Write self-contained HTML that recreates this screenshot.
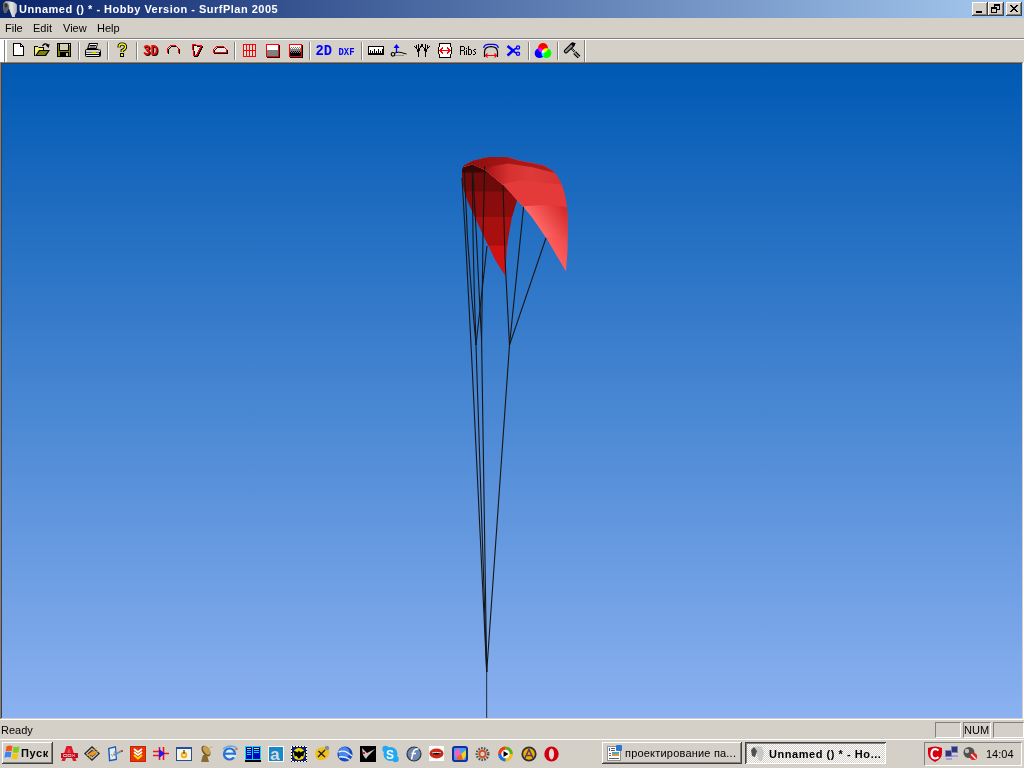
<!DOCTYPE html>
<html><head><meta charset="utf-8">
<style>
html,body{margin:0;padding:0;width:1024px;height:768px;overflow:hidden;background:#d4d0c8;font-family:"Liberation Sans",sans-serif;font-size:11px;color:#000}
.a{position:absolute}
#title{left:0;top:0;width:1024px;height:18px;background:linear-gradient(to right,#0a246a,#a6caf0)}
#ttext{left:19px;top:3px;letter-spacing:0.5px;color:#fff;font-weight:bold;font-size:11px;line-height:13px;white-space:nowrap}
.cb{width:16px;height:14px;top:2px;background:#d4d0c8;box-shadow:inset -1px -1px #404040,inset 1px 1px #fff,inset -2px -2px #808080}
.menu{top:22px;line-height:13px;white-space:nowrap}
.hl{height:1px}
.ic{width:16px;height:16px}
#vp{left:2px;top:64px;width:1020px;height:654px;background:linear-gradient(to bottom,#0059b3,#8bb1f0)}
.pane{top:722px;height:16px;box-sizing:border-box;border-top:1px solid #808080;border-left:1px solid #808080;border-bottom:1px solid #fff;border-right:1px solid #fff}
.btn{box-sizing:border-box;background:#d4d0c8;box-shadow:inset -1px -1px #404040,inset 1px 1px #fff,inset -2px -2px #808080}
</style></head><body>
<!-- title bar -->
<div id="title" class="a"></div>
<svg class="a" style="left:0;top:0" width="20" height="18" viewBox="0 0 20 18">
<defs><linearGradient id="gIc" x1="8" y1="0" x2="17" y2="0" gradientUnits="userSpaceOnUse"><stop offset="0" stop-color="#b8b8b8"/><stop offset="0.35" stop-color="#e8e8e8"/><stop offset="1" stop-color="#b0b0b8"/></linearGradient></defs>
<path d="M6 1.2 H9 L14 2.3 L16.9 4.4 V11.7 L15 15 V17 H12.2 L8.9 8.2 L7.7 9.8 L6.1 12.7 H4 L3 4.7 L4.2 2.3 Z" fill="url(#gIc)"/>
<path d="M4.2 2.6 L7 3 L8.6 5 L8.9 8.2 L7.7 9.8 L6.1 12.7 H4 L3 4.7 Z" fill="#606058"/>
<path d="M5 3.5 L7 3.8 L7.5 6 L6 8 L4.5 6 Z" fill="#303030"/>
</svg>
<div id="ttext" class="a">Unnamed () * - Hobby Version - SurfPlan 2005</div>
<div class="a cb" style="left:972px"></div>
<div class="a cb" style="left:988px"></div>
<div class="a cb" style="left:1006px"></div>
<svg class="a" style="left:960px;top:0" width="64" height="18" viewBox="960 0 64 18" shape-rendering="crispEdges">
<rect x="976" y="11" width="6" height="2" fill="#000"/>
<rect x="994" y="4" width="6" height="6" fill="#000"/><rect x="995" y="6" width="4" height="3" fill="#d4d0c8"/>
<rect x="991" y="7" width="6" height="6" fill="#000"/><rect x="992" y="9" width="4" height="3" fill="#d4d0c8"/>
<path d="M1010 5h2v1h1v1h2v-1h1v-1h2v1h-1v1h-1v1h-1v1h1v1h1v1h1v1h-2v-1h-1v-1h-2v1h-1v1h-2v-1h1v-1h1v-1h1v-1h-1v-1h-1v-1h-1z" fill="#000"/>
</svg>
<!-- menu -->
<div class="a menu" style="left:5px">File</div>
<div class="a menu" style="left:33px">Edit</div>
<div class="a menu" style="left:63px">View</div>
<div class="a menu" style="left:97px">Help</div>
<div class="a hl" style="left:0;top:38px;width:1024px;background:#808080"></div>
<div class="a hl" style="left:0;top:39px;width:1024px;background:#fff"></div>
<!-- toolbar -->
<div class="a" style="left:0;top:40px;width:7px;height:22px;background:#fff"></div>
<div class="a" style="left:4px;top:40px;width:1px;height:22px;background:#808080"></div>
<div class="a" style="left:584px;top:40px;width:1px;height:22px;background:#808080"></div>
<div class="a" style="left:585px;top:40px;width:1px;height:22px;background:#fff"></div>
<svg class="a" style="left:0;top:0" width="600" height="64" viewBox="0 0 600 64"><defs><pattern id="pWG" x="0" y="0" width="2" height="2" patternUnits="userSpaceOnUse"><rect width="2" height="2" fill="#fff"/><rect width="1" height="1" fill="#808080"/><rect x="1" y="1" width="1" height="1" fill="#808080"/></pattern>
<pattern id="pGB" x="0" y="0" width="2" height="2" patternUnits="userSpaceOnUse"><rect width="2" height="2" fill="#808080"/><rect width="1" height="1" fill="#000"/><rect x="1" y="1" width="1" height="1" fill="#000"/></pattern></defs>
<g shape-rendering="crispEdges"><rect x="78" y="42" width="1" height="18" fill="#808080"/><rect x="79" y="42" width="1" height="18" fill="#fff"/><rect x="107" y="42" width="1" height="18" fill="#808080"/><rect x="108" y="42" width="1" height="18" fill="#fff"/><rect x="136" y="42" width="1" height="18" fill="#808080"/><rect x="137" y="42" width="1" height="18" fill="#fff"/><rect x="234" y="42" width="1" height="18" fill="#808080"/><rect x="235" y="42" width="1" height="18" fill="#fff"/><rect x="309" y="42" width="1" height="18" fill="#808080"/><rect x="310" y="42" width="1" height="18" fill="#fff"/><rect x="361" y="42" width="1" height="18" fill="#808080"/><rect x="362" y="42" width="1" height="18" fill="#fff"/><rect x="528" y="42" width="1" height="18" fill="#808080"/><rect x="529" y="42" width="1" height="18" fill="#fff"/><rect x="557" y="42" width="1" height="18" fill="#808080"/><rect x="558" y="42" width="1" height="18" fill="#fff"/></g>
<!-- new -->
<path d="M14 44 H20 L23 47 V55 H14 Z" fill="#fff"/>
<path d="M13.5 55.5 V43.5 H20.5 L23.5 46.5 V55.5 Z M20.5 43.5 V46.5 H23.5" fill="none" stroke="#000" shape-rendering="crispEdges"/>
<!-- open -->
<path d="M34.5 55.5 V46.5 H37.5 L38.5 47.5 H43.5 V49.5" fill="none" stroke="#000" shape-rendering="crispEdges"/>
<polygon points="35,47 38,47 39,48 43,48 43,50 39,50 35,55" fill="#f4f470"/>
<polygon points="35,56 39,50 50,50 46,56" fill="#000"/>
<polygon points="36.6,55 40,51 48,51 45,55" fill="#808000"/>
<path d="M42.5 46 Q44.5 42.6 47.8 44.8" fill="none" stroke="#000" stroke-width="1.3"/>
<polygon points="45.8,45.2 49.6,44 48.6,48" fill="#000"/>
<!-- save -->
<g shape-rendering="crispEdges">
<rect x="57" y="43" width="14" height="14" fill="#000"/>
<rect x="58" y="44" width="12" height="12" fill="#808000"/>
<rect x="59" y="43" width="10" height="8" fill="#000"/>
<rect x="60" y="44" width="8" height="6" fill="#d4d0c8"/>
<rect x="60" y="52" width="9" height="5" fill="#000"/>
<rect x="66" y="53" width="2" height="3" fill="#c0c0c0"/>
<rect x="69" y="44" width="1" height="1" fill="#fff"/>
</g>
<!-- printer -->
<polygon points="89,43 98,43 96.5,49 87,49" fill="#000"/>
<polygon points="90,44 97,44 95.7,48 88.5,48" fill="#fff"/>
<path d="M90 45.5 H96 M89.5 47 H95.5" stroke="#000" stroke-width="1"/>
<rect x="85" y="49" width="16" height="8" rx="2" fill="#000"/>
<rect x="86" y="50" width="14" height="2" fill="#d4d0c8"/>
<rect x="86" y="52.5" width="13" height="1.5" fill="#e8e8e8"/>
<rect x="92" y="52.5" width="4" height="1.5" fill="#ffff00"/>
<rect x="86" y="55" width="13" height="1" fill="#e8e8e8"/>
<path d="M97.5 48.5 L100.5 50.5 M98.5 51 L100 49" stroke="#808080" stroke-width="1"/>
<!-- help -->
<path d="M119 47.5 Q119 44 122 44 Q125.5 44 125.5 47 Q125.5 49 122.2 50.5 V52" stroke="#000" stroke-width="3.2" fill="none"/>
<path d="M119 47.5 Q119 44 122 44 Q125.5 44 125.5 47 Q125.5 49 122.2 50.5 V52" stroke="#ffff00" stroke-width="1.3" fill="none"/>
<rect x="120" y="53" width="4" height="4" fill="#000"/><rect x="121" y="54" width="2" height="2" fill="#ffff00"/>
<!-- 3D -->
<text x="144" y="56" font-family="Liberation Mono" font-weight="bold" font-size="14.5" textLength="15" lengthAdjust="spacingAndGlyphs" fill="#000">3D</text>
<text x="143" y="55" font-family="Liberation Mono" font-weight="bold" font-size="14.5" textLength="15" lengthAdjust="spacingAndGlyphs" fill="#ff0000">3D</text>
<!-- arc -->
<g shape-rendering="crispEdges" fill="none" stroke-width="1">
<path d="M168.5 54 V49.5 L171.5 46.5 H176.5 L179.5 49.5 V54" stroke="#000"/>
<path d="M167.5 53 V48.5 L170.5 45.5 H175.5 L178.5 48.5 V53" stroke="#ff0000"/>
<!-- V -->
<polygon points="193,45 196,45 197,46 202,46.5 197,55.5 194,55.5" fill="#e8e8e8" stroke="none"/>
<path d="M193.5 45.5 H196.5 L197.5 46.5 H202.5 L197.5 56.5 H194.5 Z" stroke="#000"/>
<path d="M192.5 44.5 H195.5 L196.5 45.5 H201.5 L196.5 55.5 H193.5 Z" stroke="#ff0000"/>
<!-- dome -->
<path d="M214 48 H225 L227 51 V53 H214 Z" fill="#e8e8e8" stroke="none"/>
<path d="M214.5 53.5 V50.5 L217.5 47.5 H224.5 L227.5 50.5 V53.5 Z" stroke="#000"/>
<path d="M213.5 52.5 V49.5 L216.5 46.5 H223.5 L226.5 49.5 V52.5 Z" stroke="#ff0000"/>
</g>
<g shape-rendering="crispEdges">
<!-- grid -->
<rect x="243" y="44" width="13" height="13" fill="#ff0000"/>
<rect x="244" y="45" width="2" height="5" fill="#d0e4dc"/><rect x="247" y="45" width="2" height="5" fill="#d0e4dc"/><rect x="250" y="45" width="2" height="5" fill="#d0e4dc"/><rect x="253" y="45" width="2" height="5" fill="#d0e4dc"/>
<rect x="244" y="51" width="2" height="5" fill="#d0e4dc"/><rect x="247" y="51" width="2" height="5" fill="#d0e4dc"/><rect x="250" y="51" width="2" height="5" fill="#d0e4dc"/><rect x="253" y="51" width="2" height="5" fill="#d0e4dc"/>
<!-- half box -->
<rect x="267" y="45" width="13" height="13" fill="#000"/>
<rect x="266" y="44" width="13" height="13" fill="#ff0000"/>
<rect x="267" y="45" width="11" height="5" fill="#fff"/>
<rect x="267" y="50" width="11" height="6" fill="#808080"/>
<!-- gradient box -->
<rect x="290" y="45" width="13" height="13" fill="#000"/>
<rect x="289" y="44" width="13" height="13" fill="#ff0000"/>
<rect x="290" y="45" width="11" height="2" fill="#fff"/>
<rect x="290" y="47" width="11" height="2" fill="url(#pWG)"/>
<rect x="290" y="49" width="11" height="2" fill="#808080"/>
<rect x="290" y="51" width="11" height="2" fill="url(#pGB)"/>
<rect x="290" y="53" width="11" height="3" fill="#000"/>
</g>
<!-- 2D / DXF -->
<text x="315.5" y="55" font-family="Liberation Mono" font-weight="bold" font-size="14.5" textLength="16.5" lengthAdjust="spacingAndGlyphs" fill="#0000ff">2D</text>
<text x="338.5" y="55" font-family="Liberation Mono" font-weight="bold" font-size="11" textLength="16" lengthAdjust="spacingAndGlyphs" fill="#0000ff">DXF</text>
<!-- ruler -->
<g shape-rendering="crispEdges">
<rect x="368" y="46" width="16" height="9" fill="#000"/>
<rect x="369" y="47" width="14" height="6" fill="#fff"/>
<rect x="370" y="50" width="1" height="3" fill="#000"/><rect x="372" y="51" width="1" height="2" fill="#000"/><rect x="374" y="49" width="1" height="4" fill="#000"/><rect x="376" y="51" width="1" height="2" fill="#000"/><rect x="378" y="49" width="1" height="4" fill="#000"/><rect x="380" y="51" width="1" height="2" fill="#000"/><rect x="382" y="49" width="1" height="4" fill="#000"/>
</g>
<!-- axis -->
<path d="M396.5 53 V46" stroke="#0000ff" stroke-width="1.3"/>
<polygon points="393.5,48 399.5,48 396.5,44" fill="#0000ff"/>
<circle cx="393" cy="54.3" r="1.8" fill="none" stroke="#000" stroke-width="1.2"/>
<path d="M395 53 Q398 51.5 401 52.5 L406.5 54" stroke="#000" stroke-width="1" fill="none"/>
<path d="M395 55.5 H404" stroke="#909090" stroke-width="1"/>
<!-- lines icon -->
<g shape-rendering="crispEdges"><g fill="#000"><rect x="414" y="46" width="1" height="1"/><rect x="415" y="47" width="1" height="1"/><rect x="416" y="45" width="1" height="1"/><rect x="416" y="46" width="1" height="1"/><rect x="416" y="47" width="1" height="1"/><rect x="416" y="48" width="1" height="1"/><rect x="417" y="49" width="1" height="1"/><rect x="417" y="50" width="1" height="1"/><rect x="417" y="51" width="1" height="1"/><rect x="418" y="44" width="1" height="1"/><rect x="418" y="45" width="1" height="1"/><rect x="418" y="46" width="1" height="1"/><rect x="418" y="47" width="1" height="1"/><rect x="418" y="48" width="1" height="1"/><rect x="418" y="49" width="1" height="1"/><rect x="418" y="50" width="1" height="1"/><rect x="418" y="51" width="1" height="1"/><rect x="418" y="52" width="1" height="1"/><rect x="418" y="53" width="1" height="1"/><rect x="418" y="54" width="1" height="1"/><rect x="418" y="55" width="1" height="1"/><rect x="418" y="56" width="1" height="1"/><rect x="421" y="44" width="1" height="1"/><rect x="422" y="44" width="1" height="1"/><rect x="421" y="45" width="1" height="1"/><rect x="422" y="45" width="1" height="1"/><rect x="420" y="46" width="1" height="1"/><rect x="421" y="46" width="1" height="1"/><rect x="422" y="46" width="1" height="1"/><rect x="420" y="47" width="1" height="1"/><rect x="419" y="48" width="1" height="1"/><rect x="419" y="49" width="1" height="1"/><rect x="419" y="50" width="1" height="1"/><rect x="423" y="47" width="1" height="1"/><rect x="424" y="48" width="1" height="1"/><rect x="424" y="49" width="1" height="1"/><rect x="424" y="50" width="1" height="1"/><rect x="425" y="44" width="1" height="1"/><rect x="425" y="45" width="1" height="1"/><rect x="425" y="46" width="1" height="1"/><rect x="425" y="47" width="1" height="1"/><rect x="425" y="48" width="1" height="1"/><rect x="425" y="49" width="1" height="1"/><rect x="425" y="50" width="1" height="1"/><rect x="425" y="51" width="1" height="1"/><rect x="425" y="52" width="1" height="1"/><rect x="425" y="53" width="1" height="1"/><rect x="425" y="54" width="1" height="1"/><rect x="425" y="55" width="1" height="1"/><rect x="425" y="56" width="1" height="1"/><rect x="427" y="45" width="1" height="1"/><rect x="427" y="46" width="1" height="1"/><rect x="427" y="47" width="1" height="1"/><rect x="427" y="48" width="1" height="1"/><rect x="426" y="49" width="1" height="1"/><rect x="426" y="50" width="1" height="1"/><rect x="426" y="51" width="1" height="1"/><rect x="428" y="47" width="1" height="1"/><rect x="429" y="46" width="1" height="1"/></g>
<!-- box arrows -->
<rect x="439" y="44" width="11" height="13" fill="#fff"/><rect x="438" y="47" width="14" height="7" fill="#fff"/>
<g fill="#000"><rect x="439" y="43" width="12" height="1"/><rect x="439" y="57" width="12" height="1"/>
<rect x="439" y="43" width="1" height="4"/><rect x="438" y="47" width="1" height="7"/><rect x="439" y="54" width="1" height="4"/>
<rect x="450" y="43" width="1" height="4"/><rect x="451" y="47" width="1" height="7"/><rect x="450" y="54" width="1" height="4"/></g>
<g fill="#ff0000"><rect x="439" y="50" width="12" height="1"/>
<rect x="440" y="49" width="1" height="3"/><rect x="441" y="48" width="1" height="1"/><rect x="441" y="52" width="1" height="1"/><rect x="442" y="47" width="1" height="1"/><rect x="442" y="53" width="1" height="1"/>
<rect x="449" y="49" width="1" height="3"/><rect x="448" y="48" width="1" height="1"/><rect x="448" y="52" width="1" height="1"/><rect x="447" y="47" width="1" height="1"/><rect x="447" y="53" width="1" height="1"/><rect x="441" y="49" width="1" height="3"/><rect x="442" y="48" width="1" height="1"/><rect x="442" y="52" width="1" height="1"/><rect x="448" y="49" width="1" height="3"/><rect x="447" y="48" width="1" height="1"/><rect x="447" y="52" width="1" height="1"/></g></g>
<!-- Ribs -->
<g fill="#000" shape-rendering="crispEdges"><rect x="460" y="46" width="1" height="9"/><rect x="461" y="46" width="3" height="1"/><rect x="464" y="47" width="1" height="3"/><rect x="461" y="50" width="3" height="1"/><rect x="464" y="51" width="1" height="4"/><rect x="466" y="48" width="1" height="1"/><rect x="466" y="50" width="1" height="5"/><rect x="468" y="46" width="1" height="9"/><rect x="469" y="49" width="2" height="1"/><rect x="471" y="50" width="1" height="4"/><rect x="469" y="54" width="2" height="1"/><rect x="474" y="49" width="2" height="1"/><rect x="473" y="50" width="1" height="1"/><rect x="474" y="51" width="1" height="1"/><rect x="475" y="52" width="1" height="2"/><rect x="473" y="54" width="2" height="1"/></g>
<!-- arch -->
<path d="M483.6 48 Q484.5 44.3 488.5 44.3 H493.5 Q497.5 44.3 498.4 48" stroke="#0000ff" stroke-width="1.2" fill="none"/>
<path d="M484.5 57 V52 Q484.5 46.6 491 46.6 Q497.5 46.6 497.5 52 V57" stroke="#000" stroke-width="1.2" fill="none"/>
<path d="M485.5 55.5 H496.5 M487.5 53.5 L485.5 55.5 L487.5 57.5 M494.5 53.5 L496.5 55.5 L494.5 57.5" stroke="#ff0000" stroke-width="1.1" fill="none"/>
<!-- scissors -->
<path d="M507.5 46 L513 50.5 L507.5 55.5" stroke="#0000ff" stroke-width="2.6" fill="none"/>
<path d="M512 50.5 L517 48 M512 50.5 L517 53.5" stroke="#0000ff" stroke-width="1.5" fill="none"/>
<circle cx="518" cy="47.5" r="1.6" fill="none" stroke="#0000ff" stroke-width="1.3"/>
<circle cx="518" cy="53.7" r="1.6" fill="none" stroke="#0000ff" stroke-width="1.3"/>
<!-- color circles -->
<g style="isolation:isolate">
<circle cx="543" cy="48" r="4.9" fill="#ff0000" style="mix-blend-mode:screen"/>
<circle cx="539.6" cy="53.2" r="4.9" fill="#0000ff" style="mix-blend-mode:screen"/>
<circle cx="546.4" cy="53.2" r="4.9" fill="#00ff00" style="mix-blend-mode:screen"/>
</g>
<!-- hammer -->
<path d="M566 51.3 L572.8 44.6" stroke="#000" stroke-width="4.4" stroke-linecap="round"/>
<path d="M566 51.3 L572.8 44.6" stroke="#909090" stroke-width="2.2" stroke-linecap="round"/>
<polygon points="570.5,43 576,43 572.8,46.6" fill="#000"/>
<path d="M571.5 48.5 L574.5 51.5" stroke="#000" stroke-width="2.2" stroke-dasharray="0.9 0.7"/>
<path d="M574.6 52.6 L579 57" stroke="#000" stroke-width="3.8"/>
<path d="M574.6 52.6 L579 57" stroke="#909090" stroke-width="1.6"/>
</svg>
<!-- viewport border -->
<div class="a hl" style="left:0;top:62px;width:1023px;background:#808080"></div>
<div class="a hl" style="left:1px;top:63px;width:1021px;background:#404040"></div>
<div class="a" style="left:0;top:62px;width:1px;height:657px;background:#808080"></div>
<div class="a" style="left:1px;top:63px;width:1px;height:655px;background:#404040"></div>
<div class="a hl" style="left:0;top:719px;width:1024px;background:#fff"></div>
<div class="a" style="left:1023px;top:62px;width:1px;height:658px;background:#fff"></div>
<div id="vp" class="a"></div>
<svg id="kite" class="a" style="left:0;top:0" width="1024" height="768" viewBox="0 0 1024 768">
<defs>
<clipPath id="cU"><polygon points="464.3,165.5 472.6,161 490,157 505,157 520,170 517,199.7 511.7,217.7 507.5,241.7 505,275.5 495,259.4 482.3,233 474.5,216 468,201.7 464,190 462,175.4 462,170"/></clipPath>
<clipPath id="cT"><polygon points="464,166.4 467.8,163.2 472.6,161.3 479,159.3 484.4,158.1 490.2,157.1 506.8,157.1 518.7,160.5 532.3,163.2 543.3,165.5 552.4,170.5 557.9,177.3 562.4,186.5 565.6,198.3 567,209.3 567.6,215.6 567.6,250 566.6,262.5 566,271.5 546,237.5 532.3,217.5 524,207.4 516.9,199.7 505,186.5 499.5,182 485.8,170.6 482.4,168.8 477.5,166.6 472.6,164.2 464.3,166.8"/></clipPath>
<linearGradient id="gS" x1="464" y1="0" x2="560" y2="0" gradientUnits="userSpaceOnUse"><stop offset="0" stop-color="#8a0e0e"/><stop offset="0.5" stop-color="#a81616"/><stop offset="1" stop-color="#b01c1c"/></linearGradient>
<linearGradient id="gB1" x1="486" y1="172" x2="560" y2="172" gradientUnits="userSpaceOnUse"><stop offset="0" stop-color="#a81414"/><stop offset="0.3" stop-color="#d63030"/><stop offset="0.6" stop-color="#de3a3a"/><stop offset="1" stop-color="#d53232"/></linearGradient>
<linearGradient id="gB3" x1="533" y1="220" x2="560" y2="202" gradientUnits="userSpaceOnUse"><stop offset="0" stop-color="#ff6868"/><stop offset="1" stop-color="#d82a2a"/></linearGradient>
<linearGradient id="gB4" x1="553" y1="252" x2="575" y2="238" gradientUnits="userSpaceOnUse"><stop offset="0" stop-color="#ff5c5c"/><stop offset="1" stop-color="#e64444"/></linearGradient>
</defs>
<g clip-path="url(#cU)">
<rect x="450" y="150" width="80" height="140" fill="#d01212"/>
<rect x="450" y="150" width="80" height="95.5" fill="#a80f0f"/>
<rect x="450" y="150" width="80" height="67" fill="#8a0c0c"/>
<rect x="450" y="150" width="80" height="41.5" fill="#6e0a0a"/>
<rect x="450" y="150" width="80" height="22.5" fill="#3e0404"/>
</g>
<g clip-path="url(#cT)">
<polygon fill="url(#gB4)" points="450,140 600,140 600,300 450,300"/>
<polygon fill="url(#gB3)" points="450,140 600,140 600,238 567.4,238 546,237.5 450,242"/>
<polygon fill="#e43a3a" points="450,140 600,140 600,208 566.9,207.3 546,204.7 524,206.3 450,212"/>
<polygon fill="url(#gB1)" points="450,140 600,140 600,188 559.7,184.6 532,181.4 520,180.5 503.7,183.9 450,192"/>
<polygon fill="url(#gS)" points="450,140 600,140 600,180 554,172.8 532.3,167.3 508,163.4 492.2,166.2 485.8,170.3 482.4,168.8 477.5,166.6 472.6,164.2 464.3,166.6 450,168"/>
</g>
<g fill="none" stroke="#161616" stroke-width="1.1">
<polyline points="462,178 465.4,236 468.5,296 472.3,370 486.7,672"/>
<polyline points="464.2,168 467.4,236 471.7,296 476,345"/>
<polyline points="472.2,165 473,236 474.4,296 476,345 486.7,672"/>
<polyline points="472.4,164.7 476.4,236 479.3,296 481.6,340 486.7,672"/>
<polyline points="484.7,166 483,236 481.6,340"/>
<polyline points="487,246 476,345"/>
<polyline points="503,185 505.1,260 509.5,345"/>
<polyline points="523.6,206.8 509.5,345"/>
<polyline points="546,238 509.5,345 486.7,672"/>
</g>
<line x1="486.6" y1="672" x2="486.6" y2="718" stroke="#34405a" stroke-width="1.2"/>
</svg>
<!-- status bar -->
<div class="a" style="left:1px;top:724px;line-height:13px">Ready</div>
<div class="a pane" style="left:935px;width:26px"></div>
<div class="a pane" style="left:963px;width:28px"><span class="a" style="left:0px;top:1px;line-height:13px">NUM</span></div>
<div class="a pane" style="left:993px;width:31px"></div>
<!-- taskbar -->
<div class="a hl" style="left:0;top:739px;width:1024px;background:#fff"></div>
<div class="a btn" style="left:2px;top:742px;width:51px;height:22px"></div>
<div class="a" style="left:21px;top:747px;font-weight:bold;font-size:11px;line-height:13px;letter-spacing:0.6px">Пуск</div>
<div class="a btn" style="left:602px;top:742px;width:140px;height:22px"></div>
<div class="a" style="left:625px;top:747px;line-height:13px;white-space:nowrap;letter-spacing:0.2px">проектирование па...</div>
<div class="a" style="left:745px;top:742px;width:141px;height:22px;box-sizing:border-box;background:conic-gradient(#fff 25%,#d4d0c8 0 50%,#fff 0 75%,#d4d0c8 0) 0 0/2px 2px;box-shadow:inset 1px 1px #404040,inset -1px -1px #fff,inset 2px 2px #808080"></div>
<div class="a" style="left:769px;top:748px;line-height:13px;font-weight:bold;white-space:nowrap;letter-spacing:0.55px">Unnamed () * - Ho...</div>
<div class="a" style="left:924px;top:742px;width:98px;height:24px;box-sizing:border-box;border-top:1px solid #808080;border-left:1px solid #808080;border-bottom:1px solid #fff;border-right:1px solid #fff"></div>
<div class="a" style="left:986px;top:748px;line-height:13px">14:04</div>
<svg class="a" style="left:0;top:738px" width="1024" height="30" viewBox="0 738 1024 30">
<!-- windows logo -->
<path d="M6.5 746.5 Q9.5 744.8 12.5 746 L11.6 751.2 Q8.5 750 5.6 751.5 Z" fill="#f0561a"/>
<path d="M13.5 746.5 Q16.5 747.8 19.5 746.3 L18.6 752.2 Q15.6 753.5 12.6 752.2 Z" fill="#84cc16"/>
<path d="M5.3 752.3 Q8.3 750.9 11.4 752.2 L10.5 757.6 Q7.5 756.4 4.4 757.8 Z" fill="#3a86ee"/>
<path d="M12.4 753.2 Q15.4 754.5 18.4 753.2 L17.5 758.5 Q14.5 759.8 11.5 758.4 Z" fill="#f8c40c"/>
<!-- 1 autocad -->
<path d="M66.5 746 H71.5 L76.5 761 H73 L71.8 757.5 H66.2 L65 761 H61.5 Z" fill="#e01828"/>
<polygon points="68.2,749 69.8,749 71,754 67,754" fill="#f04858"/>
<rect x="61" y="753" width="17" height="5" fill="#c01020"/>
<path d="M63.5 754.5 H67 V756.5 H63.5 Z M68 754.5 H71 V756.5 H68 Z M72 754.5 L75 756.5 M75 754.5 L72 756.5" stroke="#f0b0b8" stroke-width="0.9" fill="none"/>
<!-- 2 winamp -->
<polygon points="92,746 100,753.5 92,761 84,753.5" fill="#202020"/>
<polygon points="92,747.8 98.2,753.5 92,759.2 85.8,753.5" fill="#c8c8c8"/>
<polygon points="92,749.5 96.5,753.5 92,757.5 87.5,753.5" fill="#404040"/>
<path d="M98.5 746.5 L86 756 L92 755 L86 761 L99 751 L93 752 Z" fill="#f09818"/>
<!-- 3 doc check -->
<polygon points="108,748 116,746 117,760 109,761.5" fill="#1a5ab8"/>
<polygon points="109.5,749 115,747.8 115.7,758.8 110.3,759.8" fill="#e0f0ff"/>
<path d="M111 754 L112.5 756.5 L115 751" stroke="#d0a040" stroke-width="1" fill="none"/>
<path d="M114 755 L121.5 751" stroke="#5090d0" stroke-width="1.6"/>
<rect x="121" y="750" width="2" height="2" fill="#e04020"/>
<!-- 4 red chevrons -->
<rect x="130" y="746" width="16" height="16" fill="#c82000"/>
<rect x="131" y="747" width="14" height="14" fill="#e03808"/>
<path d="M134 749 L138 752 L142 749 M134 752 L138 755 L142 752" stroke="#fff" stroke-width="1.6" fill="none"/>
<path d="M134 755 L138 758.5 L142 755" stroke="#ffe000" stroke-width="2" fill="none"/>
<!-- 5 diode -->
<path d="M153 751.5 H159 M153 755.5 H159 M164 753.5 H169 M159.5 747 V760 M163.5 747 V760" stroke="#ff1010" stroke-width="1.6"/>
<polygon points="159,749 165,753.5 159,758" fill="#1a1aff"/>
<!-- 6 window gear -->
<rect x="176" y="747" width="16" height="14" fill="#2050a0"/>
<rect x="177" y="749" width="14" height="11" fill="#f8f4e0"/>
<circle cx="184" cy="755" r="3.2" fill="#f0b020"/>
<circle cx="184" cy="755" r="1.2" fill="#f8f4e0"/>
<rect x="183.5" y="750" width="1" height="4" fill="#202020"/>
<!-- 7 dish -->
<ellipse cx="206" cy="751" rx="6" ry="3.6" transform="rotate(55 206 751)" fill="#6a5020"/>
<ellipse cx="206.5" cy="750.5" rx="5" ry="2.8" transform="rotate(55 206.5 750.5)" fill="#c8a050"/>
<path d="M209 748 L212.5 747" stroke="#d8b868" stroke-width="1.5"/>
<polygon points="203,755 207,755 209,762 201,762" fill="#8a6a30"/>
<!-- 8 IE-ish -->
<circle cx="229.5" cy="754" r="6.6" fill="#2a70d0"/>
<circle cx="229.5" cy="754" r="4.4" fill="#e0f0ff"/>
<rect x="225" y="752.6" width="9" height="2.2" fill="#2a70d0"/>
<path d="M229.5 754.8 L234 757.5 H236 V755 Z" fill="#d8ecff"/>
<path d="M223 749 Q229 744 236.5 747.5" stroke="#60a8f0" stroke-width="1.4" fill="none"/>
<rect x="235.5" y="748" width="2" height="2" fill="#f06020"/>
<!-- 9 far -->
<rect x="245" y="746" width="16" height="14" fill="#00e0e0"/>
<rect x="246" y="747" width="6" height="12" fill="#0000c0"/>
<rect x="253" y="747" width="7" height="12" fill="#0000c0"/>
<path d="M247 748.5 H251 M254 748.5 H259" stroke="#f0e000" stroke-width="1"/>
<path d="M247 750.5 H251 M247 752.5 H251 M247 754.5 H251 M254 750.5 H259 M254 752.5 H259" stroke="#00e0ff" stroke-width="1"/>
<rect x="245" y="760" width="16" height="2" fill="#000"/>
<!-- 10 a -->
<rect x="268" y="746" width="16" height="16" fill="#fff"/>
<rect x="269" y="747" width="14" height="14" fill="#1888c8"/>
<text x="270.3" y="759.5" font-family="Liberation Sans" font-weight="bold" font-size="17" fill="#dcdcdc">a</text>
<!-- 11 the bat -->
<rect x="291" y="746" width="16" height="16" fill="#fff"/><rect x="291.5" y="746.5" width="15" height="15" fill="none" stroke="#000" stroke-dasharray="1 2" shape-rendering="crispEdges"/>
<rect x="292" y="747" width="14" height="14" fill="#0a1a80"/>
<circle cx="299" cy="754" r="6" fill="#f0e000"/>
<path d="M293 751 Q296 750.5 297.5 752.5 L298.3 750.5 L299 752 L299.7 750.5 L300.5 752.5 Q302 750.5 305 751 Q303.5 753.5 303.5 756.5 L301.5 756 L299 759 L296.5 756 L294.5 756.5 Q294.5 753.5 293 751 Z" fill="#000"/>
<!-- 12 yellow shield X -->
<path d="M316 750 Q322 745 328 748 Q331 753 327 758 Q321 762 317 759 Q314 755 316 750 Z" fill="#f0c020"/>
<path d="M318 757 L325 750 M318.5 751 L325 757" stroke="#202020" stroke-width="1.4"/>
<circle cx="327" cy="748" r="2.2" fill="#8090a0"/>
<!-- 13 google earth -->
<circle cx="345" cy="754" r="7.6" fill="#1848c0"/>
<circle cx="344" cy="752.5" r="5.5" fill="#4a88e8"/>
<path d="M338.5 752 Q345 749 352 756 M339 757 Q345 756 350 759.5" stroke="#e8f0ff" stroke-width="1.4" fill="none"/>
<!-- 14 robot black -->
<rect x="360" y="746" width="16" height="16" fill="#000"/>
<path d="M362 748 L367 753 L375 749 L368 756 L366 759 L363 755 Z" fill="#c8c8c8"/>
<rect x="363" y="752" width="2" height="2" fill="#e02020"/>
<!-- 15 skype -->
<circle cx="390.5" cy="754" r="7" fill="#20a8f0"/>
<circle cx="385.5" cy="749" r="3.2" fill="#20a8f0"/>
<circle cx="395.5" cy="759" r="3.2" fill="#20a8f0"/>
<text x="386" y="758.5" font-family="Liberation Sans" font-weight="bold" font-size="12" fill="#fff">S</text>
<!-- 16 flash -->
<circle cx="414" cy="754" r="7.6" fill="#303848"/>
<circle cx="414" cy="754" r="6.4" fill="#7088b0"/>
<path d="M418.5 749 Q414 748.5 413 753 L411.5 759.5 M411.5 753.5 H416" stroke="#fff" stroke-width="1.5" fill="none"/>
<!-- 17 lips -->
<rect x="429" y="746" width="15" height="15" fill="#fff"/>
<ellipse cx="436.5" cy="753.5" rx="7" ry="5" fill="#d02818"/>
<path d="M431 753.5 Q436.5 751 442 753.5 Q436.5 755.5 431 753.5 Z" fill="#000"/>
<path d="M432 753 Q436.5 751.8 441 753" stroke="#fff" stroke-width="0.9" fill="none"/>
<!-- 18 colorful -->
<rect x="452" y="746" width="16" height="16" rx="3" fill="#1030a0"/>
<rect x="454" y="748" width="12" height="12" rx="1" fill="#40a0f0"/>
<polygon points="454,752 459,748 461,754 456,758" fill="#f060c0"/>
<polygon points="461,754 466,750 466,756 463,760" fill="#f0d020"/>
<polygon points="456,758 461,754 463,760 458,760" fill="#f06020"/>
<!-- 19 gear -->
<circle cx="482.5" cy="754" r="5.8" fill="none" stroke="#505050" stroke-width="2.4" stroke-dasharray="1.6 1.2"/>
<circle cx="482.5" cy="754" r="3.2" fill="none" stroke="#d05020" stroke-width="2"/>
<!-- 20 wmp -->
<circle cx="505.5" cy="754" r="7.4" fill="#f0c020"/>
<path d="M505.5 746.6 A7.4 7.4 0 0 0 498.1 754 H505.5 Z" fill="#f03820"/>
<path d="M505.5 746.6 A7.4 7.4 0 0 1 512.9 754 H505.5 Z" fill="#60b020"/>
<path d="M498.1 754 A7.4 7.4 0 0 0 505.5 761.4 V754 Z" fill="#2070e0"/>
<circle cx="505.5" cy="754" r="4.2" fill="#fff"/>
<polygon points="503.5,751 508.5,754 503.5,757" fill="#000"/>
<!-- 21 aimp -->
<circle cx="529" cy="754" r="7.6" fill="#303030"/>
<circle cx="529" cy="754" r="5.8" fill="#f8a800"/>
<path d="M525 758 L529 749.5 L533 758 M527 755.5 H532" stroke="#404070" stroke-width="1.5" fill="none"/>
<!-- 22 opera -->
<ellipse cx="551.5" cy="754" rx="7.2" ry="7.6" fill="#d00010"/>
<ellipse cx="551.5" cy="754" rx="2.6" ry="5.4" fill="#e8d8d8"/>
<!-- task button icon 1 -->
<rect x="607" y="746" width="14" height="15" fill="#909090"/>
<rect x="608" y="747" width="12" height="13" fill="#fff"/>
<rect x="609" y="748" width="1" height="3" fill="#2060c0"/>
<path d="M611 748.5 H615 M611 750.5 H615 M609 753.5 H611 M609 755.5 H611 M609 758.5 H619" stroke="#606060" stroke-width="1"/>
<rect x="612" y="752" width="7" height="4" fill="#c8a040"/>
<rect x="612" y="752" width="7" height="1.6" fill="#40a0e0"/>
<rect x="616" y="745" width="6" height="6" rx="1" fill="#2878d0"/>
<!-- task button icon 2 (kite) -->
<path d="M753 748 Q757 745 762 747 L764 753 L762 761 L759 761 L756 752 L754 753 L753 756 Z" fill="#c8c8c8"/>
<path d="M751 750 L754 747 L757 751 L755 757 L752 756 Z" fill="#505050"/>
<!-- tray -->
<path d="M928 748 Q935 745 942 748 V753 Q942 759 935 762 Q928 759 928 753 Z" fill="#d80010"/>
<path d="M938.5 750.5 Q937 749 935 749 Q931.5 749.5 931.5 754 Q931.5 758 935 758.5 Q937 758.5 938.5 757" stroke="#fff" stroke-width="2.2" fill="none"/>
<rect x="951" y="746" width="7" height="7" fill="#8080c0"/><rect x="952" y="747" width="5" height="5" fill="#303870"/>
<rect x="945" y="750" width="7" height="7" fill="#8080c0"/><rect x="946" y="751" width="5" height="5" fill="#303870"/>
<rect x="946" y="758" width="6" height="2" fill="#a0a0e0"/><rect x="952" y="755" width="6" height="2" fill="#a0a0e0"/>
<circle cx="969" cy="752.5" r="5.5" fill="#505050"/>
<circle cx="967" cy="751" r="2.2" fill="#c0c0c0"/>
<circle cx="973.5" cy="756.5" r="3.6" fill="#e02020"/>
<path d="M971.3 754.3 L975.7 758.7" stroke="#fff" stroke-width="1.3"/>
</svg>
</body></html>
